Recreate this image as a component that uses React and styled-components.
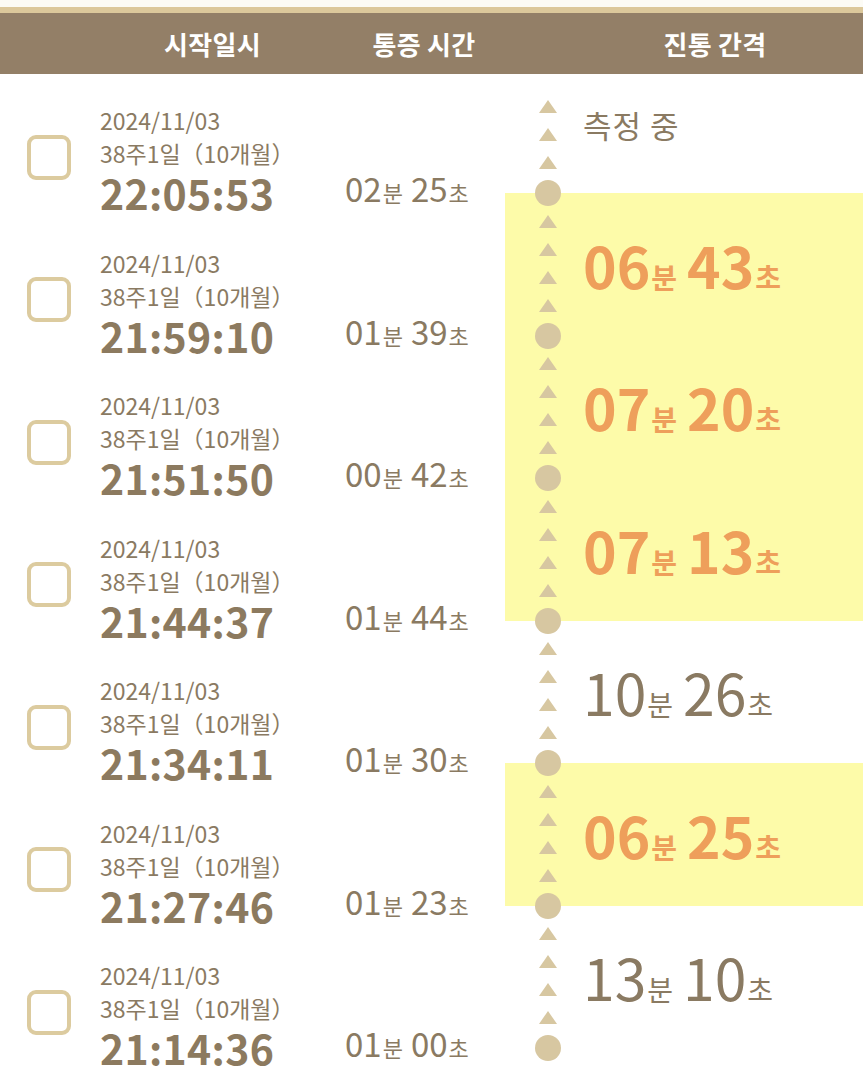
import React from "react";
import styled, { createGlobalStyle } from "styled-components";

const Global = createGlobalStyle`
  html, body {
    margin: 0;
    padding: 0;
    background: #ffffff;
    overflow: hidden;
  }
  body {
    font-family: "Noto Sans CJK KR", "Noto Sans", sans-serif;
    color: #8a7a62;
  }
  * { box-sizing: border-box; }
`;

const Page = styled.div`
  width: 863px;
  background: #ffffff;
`;

const TopBand = styled.div`
  height: 13px;
  background: #fcfbf5;
  border-bottom: 6px solid #dcc89b;
`;

const Header = styled.div`
  display: grid;
  grid-template-columns: 100px 225px 198px 1fr;
  align-items: center;
  height: 61px;
  background: #937f67;
`;

const HeadCell = styled.div`
  color: #ffffff;
  font-size: 26px;
  font-weight: 700;
  text-align: center;
  padding-left: ${(p) => p.$shift || 0}px;
  letter-spacing: 0.3px;
`;

const Body = styled.div`
  display: flex;
  align-items: flex-start;
`;

const List = styled.div`
  width: 505px;
  display: flex;
  flex-direction: column;
`;

const Row = styled.div`
  display: grid;
  grid-template-columns: 100px 245px 1fr;
  height: 142.5px;
  padding-top: 30px;
  padding-bottom: 2.5px;
`;

const Check = styled.div`
  width: 44px;
  height: 45px;
  margin-left: 27px;
  margin-top: 30.5px;
  border: 4px solid #dccb9f;
  border-radius: 9px;
  background: #ffffff;
`;

const Info = styled.div`
  display: flex;
  flex-direction: column;
`;

const DateLine = styled.div`
  font-size: 23px;
  line-height: 33px;
  color: #8a7a62;
  white-space: nowrap;
`;

const TimeLine = styled.div`
  font-size: 41px;
  line-height: 44px;
  font-weight: 700;
  color: #8c7a5f;
  letter-spacing: 0.3px;
`;

const Duration = styled.div`
  align-self: end;
  font-size: 33px;
  line-height: 44px;
  color: #8a7a62;
  white-space: nowrap;
`;

const SmallUnit = styled.span`
  font-size: 22px;
  margin-left: 1px;
  margin-right: ${(p) => (p.$gap ? 8 : 0)}px;
`;

const Timeline = styled.div`
  flex: 1;
  display: flex;
  flex-direction: column;
`;

const Segment = styled.div`
  position: relative;
  display: flex;
  height: ${(p) => (p.$first ? 119 : 142.5)}px;
  background: ${(p) => (p.$hl ? "#fdfba9" : "transparent")};
`;

const Track = styled.div`
  width: 78px;
  flex-shrink: 0;
  display: flex;
  flex-direction: column;
  justify-content: flex-end;
  align-items: flex-start;
  gap: 15px;
  padding-left: 34px;
  padding-bottom: 24px;
`;

const Tri = styled.div`
  width: 0;
  height: 0;
  border-left: 9px solid transparent;
  border-right: 9px solid transparent;
  border-bottom: 13px solid #d7c7a1;
`;

const Dot = styled.div`
  position: absolute;
  left: 30px;
  bottom: -13px;
  width: 26px;
  height: 26px;
  border-radius: 50%;
  background: #d7c7a1;
  z-index: 2;
`;

const Interval = styled.div`
  display: flex;
  align-items: center;
  padding-bottom: ${(p) => (p.$first ? 19 : 0)}px;
  white-space: nowrap;
`;

const Measuring = styled.span`
  font-size: 31px;
  color: #8a7a62;
  letter-spacing: 1px;
`;

const Big = styled.span`
  font-size: 57px;
  line-height: 1;
  font-weight: ${(p) => (p.$hl ? 700 : 400)};
  color: ${(p) => (p.$hl ? "#ee9f5b" : "#8a7a62")};
`;

const BigUnit = styled.span`
  font-size: 28px;
  margin-left: 1px;
  margin-right: ${(p) => (p.$gap ? 10 : 0)}px;
`;

const rows = [
  { time: "22:05:53", dur: ["02", "25"] },
  { time: "21:59:10", dur: ["01", "39"] },
  { time: "21:51:50", dur: ["00", "42"] },
  { time: "21:44:37", dur: ["01", "44"] },
  { time: "21:34:11", dur: ["01", "30"] },
  { time: "21:27:46", dur: ["01", "23"] },
  { time: "21:14:36", dur: ["01", "00"] },
];

const intervals = [
  null,
  { m: "06", s: "43", hl: true },
  { m: "07", s: "20", hl: true },
  { m: "07", s: "13", hl: true },
  { m: "10", s: "26", hl: false },
  { m: "06", s: "25", hl: true },
  { m: "13", s: "10", hl: false },
];

export default function App() {
  return (
    <Page>
      <Global />
      <TopBand />
      <Header>
        <span />
        <HeadCell>시작일시</HeadCell>
        <HeadCell>통증 시간</HeadCell>
        <HeadCell $shift={44}>진통 간격</HeadCell>
      </Header>
      <Body>
        <List>
          {rows.map((r) => (
            <Row key={r.time}>
              <Check />
              <Info>
                <DateLine>2024/11/03</DateLine>
                <DateLine>38주1일（10개월）</DateLine>
                <TimeLine>{r.time}</TimeLine>
              </Info>
              <Duration>
                {r.dur[0]}
                <SmallUnit $gap>분</SmallUnit>
                {r.dur[1]}
                <SmallUnit>초</SmallUnit>
              </Duration>
            </Row>
          ))}
        </List>
        <Timeline>
          {intervals.map((iv, i) => (
            <Segment key={i} $first={i === 0} $hl={iv && iv.hl}>
              <Track>
                {Array.from({ length: i === 0 ? 3 : 4 }).map((_, k) => (
                  <Tri key={k} />
                ))}
              </Track>
              <Interval $first={i === 0}>
                {iv ? (
                  <Big $hl={iv.hl}>
                    {iv.m}
                    <BigUnit $gap>분</BigUnit>
                    {iv.s}
                    <BigUnit>초</BigUnit>
                  </Big>
                ) : (
                  <Measuring>측정 중</Measuring>
                )}
              </Interval>
              <Dot />
            </Segment>
          ))}
        </Timeline>
      </Body>
    </Page>
  );
}
